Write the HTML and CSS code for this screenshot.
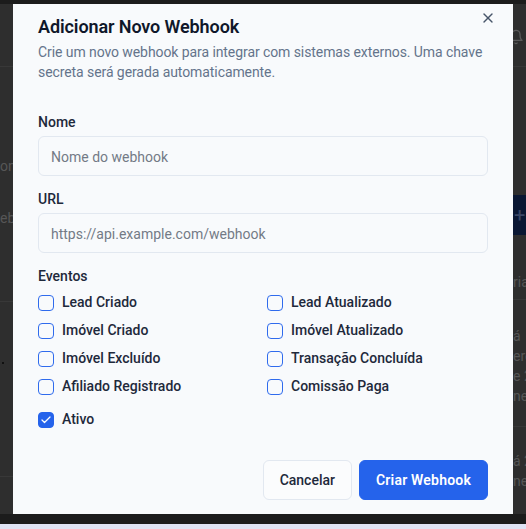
FILE: index.html
```html
<!DOCTYPE html>
<html lang="pt-BR">
<head>
<meta charset="utf-8">
<title>Adicionar Novo Webhook</title>
<link rel="stylesheet" href="styles.css">
</head>
<body>
<div class="app">
  <aside class="side side-left">
    <div class="bg-header"></div>
    <div class="bg-text t-on">on</div>
    <div class="bg-text t-eba">eba</div>
    <div class="bg-rule r-left1"></div>
    <div class="bg-dot d1"></div>
    <div class="bg-rule r-left2"></div>
    <div class="bg-dot d2"></div>
  </aside>
  <main class="center"></main>
  <aside class="side side-right">
    <div class="bg-header">
      <svg class="bell" width="16" height="16" viewBox="0 0 24 24" fill="none" stroke="#5a5a5a" stroke-width="2" stroke-linecap="round" stroke-linejoin="round"><path d="M6 8a6 6 0 0 1 12 0c0 7 3 9 3 9H3s3-2 3-9"/><path d="M10.3 21a1.94 1.94 0 0 0 3.4 0"/></svg>
    </div>
    <div class="bg-btn"><span>+</span></div>
    <div class="bg-text t-ria">ria</div>
    <div class="bg-rule r-right1"></div>
    <div class="bg-lines l1">
      <div>á</div><div>ero</div><div>e 2</div><div>nes</div>
    </div>
    <div class="bg-rule r-right2"></div>
    <div class="bg-lines l2">
      <div>á 2</div><div>nes</div>
    </div>
  </aside>
</div>
<div class="bottom-strip"></div>

<div class="dialog" role="dialog" aria-labelledby="dlg-title">
  <div class="dlg-header">
    <h2 id="dlg-title" class="dlg-title">Adicionar Novo Webhook</h2>
    <p class="dlg-desc">Crie um novo webhook para integrar com sistemas externos. Uma chave secreta será gerada automaticamente.</p>
  </div>

  <form class="dlg-form">
    <div class="field">
      <label class="field-label" for="nome">Nome</label>
      <input class="field-input" id="nome" type="text" placeholder="Nome do webhook">
    </div>
    <div class="field">
      <label class="field-label" for="url">URL</label>
      <input class="field-input" id="url" type="text" placeholder="https://api.example.com/webhook">
    </div>
    <div class="field field-events">
      <span class="field-label">Eventos</span>
      <div class="events-grid">
        <label class="check"><span class="box"></span><span class="check-text">Lead Criado</span></label>
        <label class="check"><span class="box"></span><span class="check-text">Lead Atualizado</span></label>
        <label class="check"><span class="box"></span><span class="check-text">Imóvel Criado</span></label>
        <label class="check"><span class="box"></span><span class="check-text">Imóvel Atualizado</span></label>
        <label class="check"><span class="box"></span><span class="check-text">Imóvel Excluído</span></label>
        <label class="check"><span class="box"></span><span class="check-text">Transação Concluída</span></label>
        <label class="check"><span class="box"></span><span class="check-text">Afiliado Registrado</span></label>
        <label class="check"><span class="box"></span><span class="check-text">Comissão Paga</span></label>
      </div>
    </div>
    <label class="check check-active"><span class="box box-checked"><svg width="12" height="12" viewBox="0 0 24 24" fill="none" stroke="#fff" stroke-width="2.5" stroke-linecap="round" stroke-linejoin="round"><path d="M20 6 9 17l-5-5"/></svg></span><span class="check-text">Ativo</span></label>

    <div class="dlg-footer">
      <button type="button" class="btn btn-outline">Cancelar</button>
      <button type="button" class="btn btn-primary">Criar Webhook</button>
    </div>
  </form>

  <button type="button" class="dlg-close" aria-label="Fechar">
    <svg width="16" height="16" viewBox="0 0 24 24" fill="none" stroke="currentColor" stroke-width="2" stroke-linecap="round" stroke-linejoin="round"><path d="M18 6 6 18"/><path d="m6 6 12 12"/></svg>
  </button>
</div>
</body>
</html>
```
FILE: styles.css
```css
* { box-sizing: border-box; }

html, body {
  margin: 0;
  padding: 0;
}

body {
  width: 526px;
  height: 529px;
  overflow: hidden;
  background: #1c1c1c;
  font-family: Roboto, "Noto Sans", sans-serif;
  position: relative;
}

/* ---------- dimmed page behind the dialog ---------- */
.app {
  margin-top: 4px;
  height: 510px;
  display: grid;
  grid-template-columns: 13px 1fr 13px;
  background: #2e2e2e;
}

.side {
  overflow: hidden;
  display: flex;
  flex-direction: column;
  color: #565656;
  font-size: 14px;
  line-height: 20px;
}

.bg-header {
  height: 63px;
  flex: none;
  border-bottom: 1px solid #383838;
}

.side-right .bg-header {
  padding-top: 25px;
}

.bell {
  display: block;
  margin-left: -5px;
}

.bg-text {
  white-space: nowrap;
  flex: none;
}

.t-on {
  margin-top: 89px;
}

.t-eba {
  margin-top: 32px;
}

.bg-rule {
  flex: none;
  height: 1px;
  background: #383838;
}

.r-left1 { margin-top: 73px; }
.r-left2 { margin-top: 112px; }

.bg-dot {
  flex: none;
  width: 2px;
  height: 2px;
  margin-left: 2px;
  background: #101010;
}

.d1 { margin-top: 60px; }
.d2 { margin-top: 57px; }

.bg-btn {
  flex: none;
  margin-top: 128px;
  height: 40px;
  background: #0a1733;
  color: #3a4766;
  font-size: 20px;
  line-height: 40px;
  padding-left: 1px;
}

.t-ria { margin-top: 37px; }
.r-right1 { margin-top: 7px; }

.bg-lines {
  flex: none;
  white-space: nowrap;
}

.l1 { margin-top: 26px; }
.r-right2 { margin-top: 20px; }
.l2 { margin-top: 24px; }

.bottom-strip {
  margin-top: 10px;
  height: 5px;
  background: #dfe3f4;
}

/* ---------- dialog ---------- */
.dialog {
  position: absolute;
  top: 4px;
  left: 13px;
  width: 500px;
  height: 510px;
  background: #f8fafc;
  padding: 14px 25px 14px;
  color: #0f172a;
}

.dlg-header {
  display: flex;
  flex-direction: column;
  gap: 6px;
}

.dlg-title {
  margin: 0;
  font-size: 18px;
  font-weight: 600;
  line-height: 18px;
  letter-spacing: -0.1px;
  color: #0f172a;
}

.dlg-desc {
  margin: 0;
  font-size: 14px;
  line-height: 20px;
  letter-spacing: -0.08px;
  color: #64748b;
}

.dlg-form {
  margin-top: 33px;
  display: flex;
  flex-direction: column;
}

.field {
  display: flex;
  flex-direction: column;
  gap: 7px;
}

.field + .field {
  margin-top: 16px;
}

.field-label {
  font-size: 14px;
  font-weight: 500;
  line-height: 14px;
  color: #1e293b;
}

.field-input {
  height: 40px;
  width: 100%;
  border: 1px solid #e2e8f0;
  border-radius: 6px;
  background: transparent;
  padding: 1px 12px 0;
  font-family: Roboto, "Noto Sans", sans-serif;
  font-size: 14px;
  color: #0f172a;
  outline: none;
}

.field-input::placeholder {
  color: #737a86;
}

.field-events {
  gap: 12px;
}

.events-grid {
  display: grid;
  grid-template-columns: 1fr 1fr;
  column-gap: 8px;
  row-gap: 12px;
}

.check {
  display: flex;
  align-items: flex-start;
  gap: 8px;
  height: 16px;
}

.box {
  flex: none;
  width: 16px;
  height: 16px;
  border: 1.5px solid #2f6bed;
  border-radius: 4px;
  display: flex;
  align-items: center;
  justify-content: center;
}

.box-checked {
  background: #2563eb;
  border-color: #2563eb;
}

.check-text {
  font-size: 14px;
  font-weight: 500;
  line-height: 14px;
  color: #1e293b;
}

.check-active {
  margin-top: 17px;
}

.dlg-footer {
  margin-top: 32px;
  display: flex;
  justify-content: flex-end;
  gap: 7px;
}

.btn {
  height: 40px;
  padding: 0 16px;
  border-radius: 6px;
  font-family: Roboto, "Noto Sans", sans-serif;
  font-size: 14px;
  font-weight: 500;
  cursor: pointer;
}

.btn-outline {
  background: #fbfcfd;
  border: 1px solid #e2e8f0;
  color: #1e293b;
}

.btn-primary {
  background: #2563eb;
  border: 1px solid #2563eb;
  color: #ffffff;
  font-weight: 600;
  letter-spacing: 0.2px;
}

.dlg-close {
  position: absolute;
  top: 6px;
  right: 17px;
  width: 16px;
  height: 16px;
  padding: 0;
  border: 0;
  background: none;
  color: #475569;
  display: flex;
  align-items: center;
  justify-content: center;
  cursor: pointer;
}
```
